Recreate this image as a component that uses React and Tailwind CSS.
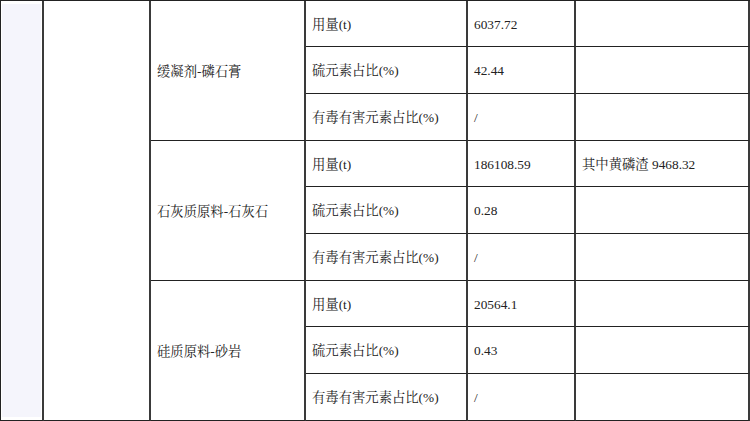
import React from "react";

const groups = [
  {
    name: "缓凝剂-磷石膏",
    rows: [
      { label: "用量(t)", value: "6037.72", note: "" },
      { label: "硫元素占比(%)", value: "42.44", note: "" },
      { label: "有毒有害元素占比(%)", value: "/", note: "" },
    ],
  },
  {
    name: "石灰质原料-石灰石",
    rows: [
      { label: "用量(t)", value: "186108.59", note: "其中黄磷渣 9468.32" },
      { label: "硫元素占比(%)", value: "0.28", note: "" },
      { label: "有毒有害元素占比(%)", value: "/", note: "" },
    ],
  },
  {
    name: "硅质原料-砂岩",
    rows: [
      { label: "用量(t)", value: "20564.1", note: "" },
      { label: "硫元素占比(%)", value: "0.43", note: "" },
      { label: "有毒有害元素占比(%)", value: "/", note: "" },
    ],
  },
];

// vertical rules a bit heavier than the horizontal ones, like the source
const cell =
  "flex items-center border-r-2 border-r-[#3a3a3a] border-b border-b-[#222] pl-[6px] pt-[2px] text-[13.33px] text-[#222] whitespace-nowrap";

export default function App() {
  return (
    <div
      className="w-[750px] h-[421px] bg-white overflow-hidden"
      style={{ fontFamily: '"Liberation Serif", "Noto Serif CJK SC", "Noto Sans CJK SC", serif' }}
    >
      <div className="grid grid-cols-[43px_107px_155px_162px_108px_174px] grid-rows-[46px_47px_47px_46px_47px_47px_46px_47px_47px] border-l border-t border-[#222]">
        <div className="row-span-9 border-r-2 border-r-[#3a3a3a] border-b border-b-[#222] bg-[#f5f5fc] shadow-[inset_1px_3px_0_0_#ffffff,inset_-1px_-3px_0_0_#ffffff]" />
        <div className="row-span-9 border-r-2 border-r-[#3a3a3a] border-b border-b-[#222]" />
        {groups.map((g) => (
          <React.Fragment key={g.name}>
            <div className={`${cell} row-span-3`}>{g.name}</div>
            {g.rows.map((r, i) => (
              <React.Fragment key={i}>
                <div className={`${cell} pl-[5px]`}>{r.label}</div>
                <div className={cell}>{r.value}</div>
                <div className={`${cell} pl-[4px]`}>{r.note}</div>
              </React.Fragment>
            ))}
          </React.Fragment>
        ))}
      </div>
    </div>
  );
}
